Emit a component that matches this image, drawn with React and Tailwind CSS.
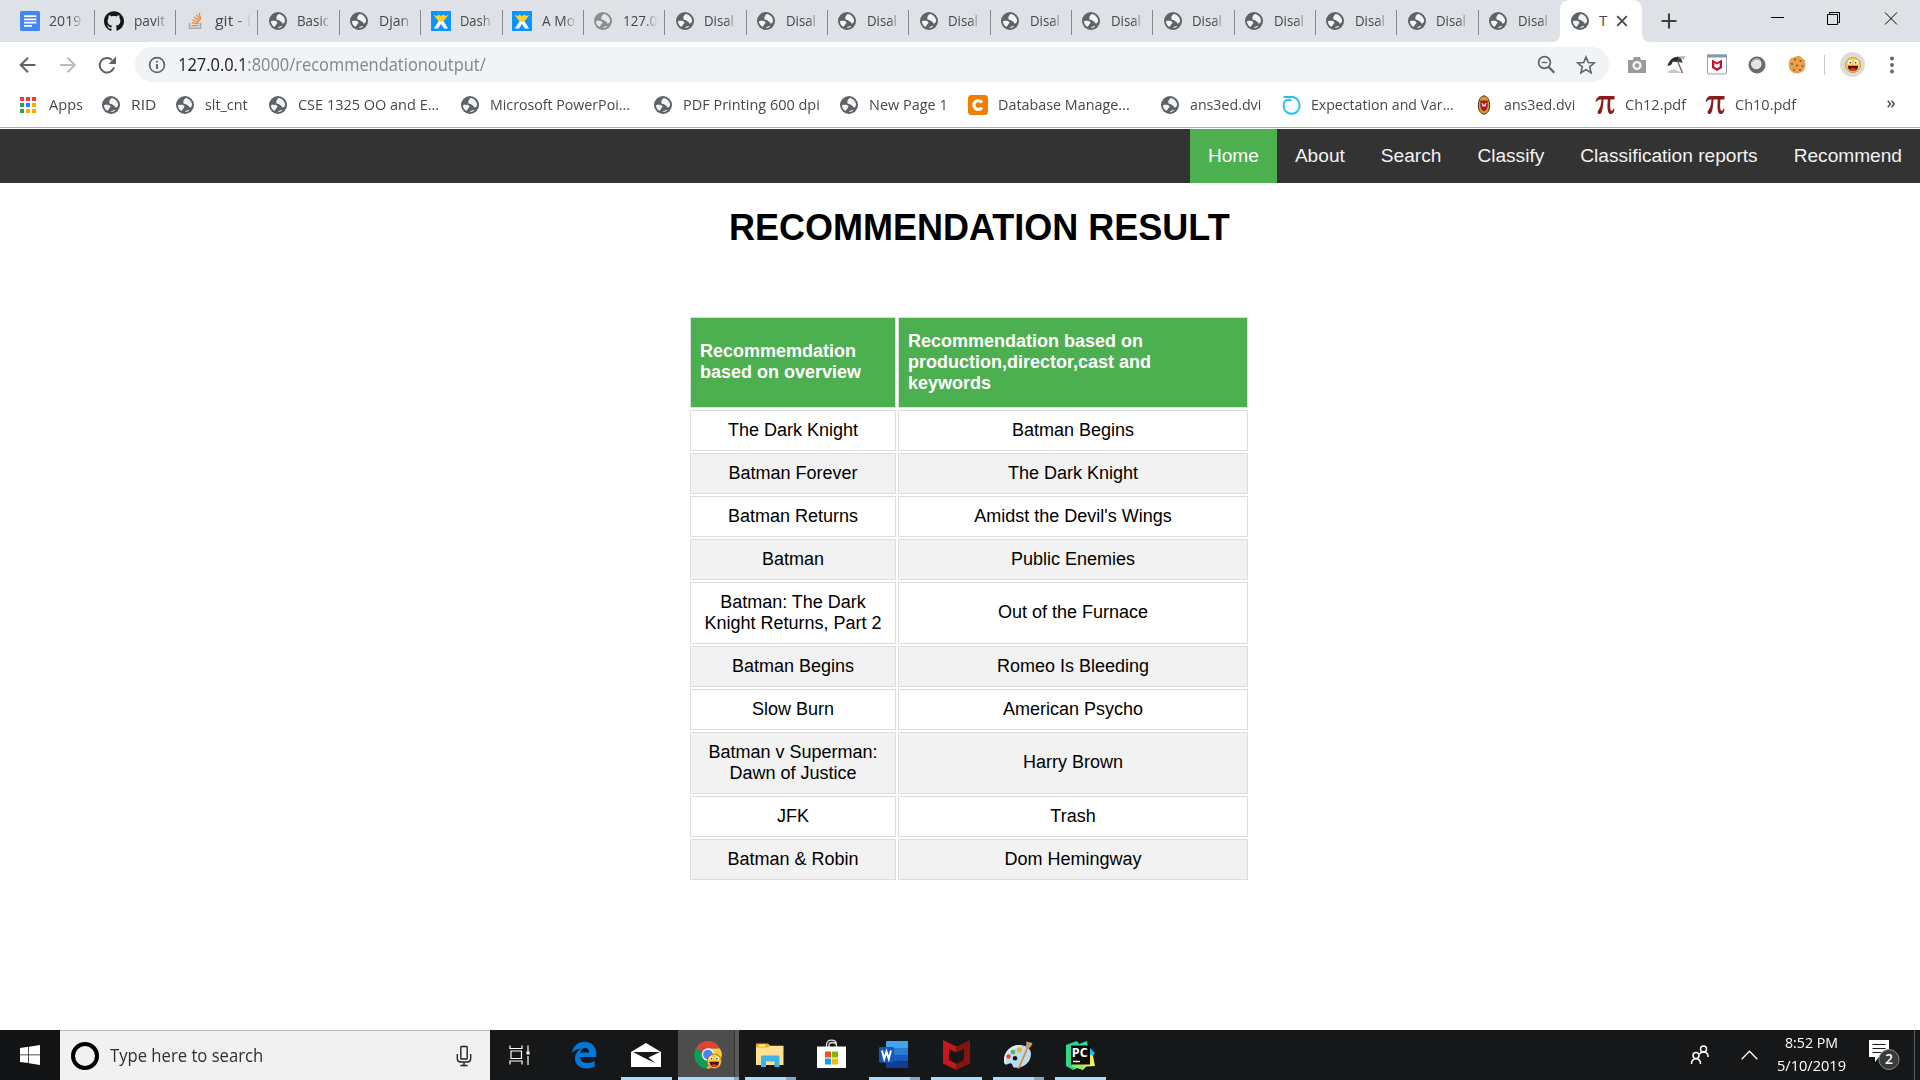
import React, { useLayoutEffect, useRef, useState } from "react";
import { SiGithub } from "react-icons/si";

/* Text condensed or stretched horizontally to an exact width. */
function Fit({ w, className = "", children }) {
  const ref = useRef(null);
  const [s, setS] = useState(1);
  useLayoutEffect(() => {
    setS(w / ref.current.offsetWidth);
  }, [w]);
  return (
    <span className={"block whitespace-nowrap " + className} style={{ width: w }}>
      <span ref={ref} className="inline-block origin-left" style={{ transform: `scaleX(${s})` }}>
        {children}
      </span>
    </span>
  );
}

const Globe = ({ light }) => (
  <svg viewBox="0 0 20 20" className="h-5 w-5 shrink-0">
    <circle cx="10" cy="10" r="9" fill={light ? "#8b8d90" : "#5f6368"} />
    <path
      d="M10.6 2.9 L9.2 4.6 C8.8 6 7.6 6.2 8.6 7.4 C7.6 8.4 8.8 8.8 10.4 8.9 C11.6 9 11.6 10.4 13 10.6 C14.4 10.8 13.4 12.6 14.8 12.6 C16.4 12.4 17 11 17.1 9.6 C16.9 6.5 14.4 3.4 10.6 2.9 Z M3 10.2 C5 9.4 8.4 9.8 9.3 11 C10 12.4 8.4 12.6 8.2 13.6 C8 15 6.8 14.6 6.6 15.9 C4.4 14.8 2.8 12.4 3 10.2 Z M10 17 C10.4 15.4 12.4 15.8 13.2 14.8 L14.2 15.6 C13 16.7 11.4 17.2 10 17 Z"
      fill={light ? "#e3e6e9" : "#f1f3f4"}
    />
  </svg>
);

const Docs = () => (
  <svg viewBox="0 0 20 20" className="h-5 w-5 shrink-0">
    <rect width="20" height="20" rx="1.5" fill="#4285f4" />
    <path d="M4 5.2h12.4M4 8.4h12.4M4 11.6h12.4M4 14.8h8" stroke="#fff" strokeWidth="1.7" />
  </svg>
);

const Stack = () => (
  <svg viewBox="0 0 20 20" className="h-5 w-5 shrink-0" fill="none">
    <path d="M3.5 12v5.2h11V12" stroke="#a6abb0" strokeWidth="1.6" />
    <path
      d="M5.5 14.6h7M5.8 11.6l6.8 1.1M6.4 8.8l6.4 2.5M8 6l5.6 4.1M10.3 3.6l4.2 5.2M13 2l1.8 6.4"
      stroke="#f48024"
      strokeWidth="1.2"
    />
  </svg>
);

const Wix = () => (
  <svg viewBox="0 0 20 20" className="h-5 w-5 shrink-0">
    <rect width="20" height="20" fill="#0c94fb" />
    <path d="M3 17.5 L8 9.5 h4 L17 17.5 h-4 L10 13 L7 17.5Z" fill="#fff" />
    <path d="M2.5 4 l3.5 1 l1.3-1.6 L10 5 l2.7-1.6 L14 5 l3.5-1 L13.5 9 L11.5 10.8 h-3 L6.5 9Z" fill="#fcd02c" />
  </svg>
);

/* icon, label, label width, tab width */
const TABS = [
  [Docs, "2019", 32, 84.5],
  [() => <SiGithub className="h-5 w-5 shrink-0 text-[#171515]" />, "pavit", 31, 81.7],
  [Stack, "git - l", 36, 82.3],
  [Globe, "Basic", 32, 81.35],
  [Globe, "Djan", 30, 81.35],
  [Wix, "Dash", 31, 81.35],
  [Wix, "A Mo", 33, 81.35],
  [() => <Globe light />, "127.0", 34, 81.35],
  ...Array.from({ length: 11 }, () => [Globe, "Disal", 30, 81.35]),
];

function TabStrip() {
  return (
    <div className="flex h-[42px] bg-[#dee1e6] pl-[10px]">
      {TABS.map(([Icon, label, lw, tw], i) => (
        <div key={i} className="flex h-[42px] shrink-0 items-center pl-[9.5px]" style={{ width: tw }}>
          <Icon />
          <div className="-mt-[2px] ml-[9.5px] w-[36px] shrink-0 [mask-image:linear-gradient(90deg,#000_60%,rgba(0,0,0,0.15)_90%)]">
            <Fit w={lw} className="text-[15px] leading-5 text-[#45484c]">
              {label}
            </Fit>
          </div>
          <div className={"ml-auto mt-[2px] h-[25px] w-px " + (i === 18 ? "" : "bg-[#86898d]")} />
        </div>
      ))}
      <div className="flex">
        <svg viewBox="0 0 98 42" className="-ml-2 h-[42px] w-[98px] shrink-0">
          <path d="M0 42 Q8 42 8 33 V10 Q8 0 18 0 H80 Q90 0 90 10 V33 Q90 42 98 42Z" fill="#fff" />
        </svg>
        <div className="-ml-[90px] flex w-[90px] items-center pl-[10px]">
          <Globe />
          <span className="-mt-[2px] ml-[9px] w-[9px] text-[15px] leading-5 text-[#45484c]">T</span>
          <svg viewBox="0 0 12 12" className="ml-[8px] h-3 w-3">
            <path d="M1.2 1.2l9.6 9.6M10.8 1.2l-9.6 9.6" stroke="#45484c" strokeWidth="1.8" />
          </svg>
        </div>
      </div>
      <div className="flex flex-1 pl-[11px] pt-[13px]">
        <svg viewBox="0 0 16 16" className="h-4 w-4">
          <path d="M8 .5v15M.5 8h15" stroke="#3c4043" strokeWidth="2.1" />
        </svg>
      </div>
      <svg viewBox="0 0 130 14" className="mr-[22px] mt-[12px] h-[14px] w-[130px] shrink-0" fill="none" stroke="#000">
        <path d="M3 5.5h13M117 .5l12 12M129 .5l-12 12" />
        <path d="M59.5 2.500h10v10h-10zM61.500 2.500V.500h10v10h-2" />
      </svg>
    </div>
  );
}

function Toolbar() {
  return (
    <div className="flex h-[45px] items-center bg-white">
      <svg viewBox="0 0 100 20" className="ml-[18px] h-5 w-[100px] shrink-0" fill="none" strokeWidth="2">
        <path d="M17.500 10H3M10 2.700L2.700 10l7.300 7.300" stroke="#5f6368" />
        <path d="M42 10h14.500M49.500 2.700l7.300 7.300-7.300 7.300" stroke="#babcbe" />
        <path d="M96 12.200a7.300 7.300 0 1 1-1.900-7.200" stroke="#5f6368" />
        <path d="M98 1.500v7.400h-7.400z" fill="#5f6368" />
      </svg>
      <div className="ml-[17px] flex h-[35px] w-[1474px] shrink-0 items-center rounded-full bg-[#f1f3f4]">
        <svg viewBox="0 0 18 18" className="ml-[13px] h-[18px] w-[18px]" fill="none">
          <circle cx="9" cy="9" r="7.400" stroke="#5f6368" strokeWidth="1.700" />
          <path d="M9 8v5M9 4.700v1.900" stroke="#5f6368" strokeWidth="1.900" />
        </svg>
        <Fit w={308} className="-mt-[2px] ml-[12px] text-[17.5px] leading-6 text-[#80868b]">
          <span className="text-[#202124]">127.0.0.1</span>:8000/recommendationoutput/
        </Fit>
        <svg viewBox="0 0 60 20" className="ml-auto mr-[13px] h-5 w-[60px]" fill="none" stroke="#5f6368">
          <circle cx="8.500" cy="7.500" r="5.900" strokeWidth="1.700" />
          <path d="M12.700 12l5.500 5.700" strokeWidth="2.200" />
          <path d="M5.700 7.500h5.600" strokeWidth="1.300" />
          <path
            d="M50 2l2.300 5.500 6 .5-4.600 3.900 1.400 5.800L50 14.600l-5.100 3.100 1.400-5.800L41.700 8l6-.5z"
            strokeWidth="1.600"
          />
        </svg>
      </div>
      <div className="ml-[18px] flex items-center">
        <svg viewBox="0 0 20 18" className="h-[18px] w-5">
          <path d="M1 4h5l1-3h6l1 3h5v13H1z" fill="#9a9a9a" />
          <circle cx="10" cy="9.500" r="4.600" fill="#f4f4f4" />
          <circle cx="10" cy="9.500" r="2.300" fill="#9a9a9a" />
        </svg>
        <svg viewBox="0 0 22 20" className="ml-[19px] h-5 w-[22px]">
          <path d="M1 17Q7 13 10 15l7 3H3z" fill="#c9c9c9" />
          <path d="M1.500 11C3 5 8 1 13 2l-2 5-4-.5-2 3.500z" fill="#2b2b2b" />
          <path d="M13 2q3 1 3.500 6L11 6.500z" fill="#444" />
          <path d="M12 1.500L20 1q-3 2-1.500 4l-2-1z" fill="#b5b5b5" />
          <path d="M11.500 6l5 12" stroke="#8b4a3c" strokeWidth="1.200" />
        </svg>
        <svg viewBox="0 0 20 20" className="ml-[19px] h-[21px] w-5">
          <rect x=".5" y=".5" width="19" height="19" rx="1" fill="#fff" stroke="#9aa0a6" />
          <rect width="20" height="3" fill="#7f9dac" />
          <path d="M5 5l5 3 5-3v8.500l-5 3-5-3z" fill="#c8102e" />
          <path d="M7.300 8.500L10 10l2.700-1.500v3.800L10 13.800l-2.700-1.500z" fill="#fff" />
        </svg>
        <svg viewBox="0 0 18 18" className="ml-[21px] h-[18px] w-[18px]">
          <circle cx="9" cy="9" r="8.500" fill="#68696a" />
          <circle cx="8.300" cy="8" r="5.300" fill="#e4e4e4" />
          <path d="M4 6a5.300 5.300 0 0 1 8-2" stroke="#aaa" strokeWidth="1.500" fill="none" />
        </svg>
        <svg viewBox="0 0 20 20" className="ml-[21px] h-5 w-5">
          <path d="M10 1Q13 0 15 3l3 2 .5 6-2 5-5 2.500-5-.500-4-3.500-1-6 2-5Z" fill="#e9a04b" />
          <g fill="#8a5220">
            <circle cx="8" cy="4.500" r="1" />
            <circle cx="13.500" cy="6" r="1" />
            <circle cx="5" cy="9" r="1" />
            <circle cx="10" cy="10.500" r="1.100" />
            <circle cx="15.500" cy="11" r="1" />
            <circle cx="7" cy="15" r="1" />
            <circle cx="13" cy="15" r="1" />
          </g>
        </svg>
        <div className="ml-[17px] h-5 w-px bg-[#c6c8ca]" />
        <div className="ml-[15px] flex h-[25px] w-[25px] items-center justify-center rounded-full bg-[#dcdcdc]">
          <Smiley className="h-4 w-4" />
        </div>
        <svg viewBox="0 0 4 18" className="ml-[25px] h-[18px] w-1" fill="#5f6368">
          <circle cx="2" cy="2.500" r="1.900" />
          <circle cx="2" cy="9" r="1.900" />
          <circle cx="2" cy="15.500" r="1.900" />
        </svg>
      </div>
    </div>
  );
}

const Smiley = ({ className }) => (
  <svg viewBox="0 0 16 16" className={className}>
    <circle cx="8" cy="8" r="7.600" fill="#fbcf4b" stroke="#c98a17" strokeWidth=".7" />
    <ellipse cx="5" cy="5.200" rx="2" ry="2.200" fill="#fff" />
    <ellipse cx="11" cy="5.200" rx="2" ry="2.200" fill="#fff" />
    <circle cx="5.300" cy="5.600" r=".9" fill="#333" />
    <circle cx="10.700" cy="5.600" r=".9" fill="#333" />
    <path d="M2.800 8.700h10.400Q13 14 8 14.200 3 14 2.800 8.700Z" fill="#5a0d12" />
    <path d="M4.700 12.200Q8 10 11.300 12.200 10 14 8 14.100 6 14 4.700 12.200Z" fill="#e33b3b" />
  </svg>
);

const AppsIcon = () => (
  <svg viewBox="0 0 20 20" className="h-5 w-5 shrink-0">
    <path d="M1 2h4v4H1zM7 2h4v4H7zM13 2h4v4h-4z" fill="#f23d36" />
    <path d="M1 8h4v4H1zM1 14h4v4H1z" fill="#2fa055" />
    <path d="M7 8h4v4H7z" fill="#2f85f0" />
    <path d="M13 8h4v4h-4zM7 14h4v4H7zM13 14h4v4h-4z" fill="#f9ab00" />
  </svg>
);

const Chegg = () => (
  <svg viewBox="0 0 20 20" className="h-5 w-5 shrink-0">
    <rect width="20" height="20" rx="3.500" fill="#f27e00" />
    <path d="M13.900 7.600A4.400 4.400 0 1 0 13.900 12.600" fill="none" stroke="#fff" strokeWidth="3.200" />
  </svg>
);

const Ring = () => (
  <svg viewBox="0 0 20 20" className="h-5 w-5 shrink-0" fill="none" stroke="#22c3f0" strokeWidth="1.900">
    <path d="M2.500 2H12Q18.600 3.500 18.600 11a8 7.800 0 0 1-16 0Q2.500 6.500 5.500 5.200 8 4.200 10.500 5.500" />
  </svg>
);

const Crest = () => (
  <svg viewBox="0 0 20 20" className="h-5 w-5 shrink-0">
    <ellipse cx="10" cy="10" rx="5.700" ry="9.200" fill="#caa33a" stroke="#4a3510" strokeWidth="1" />
    <path d="M6.300 5.500h7.400v6Q13 15 10 16.500 7 15 6.300 11.500Z" fill="#b5121b" />
    <path d="M8 8l1 3.500L10 9.500l1 2 1-3.500" stroke="#fff" fill="none" strokeWidth="1" />
  </svg>
);

const Pi = () => (
  <svg viewBox="0 0 20 20" className="h-5 w-5 shrink-0">
    <path
      d="M.5 6.500Q2 1 5.500 1H19.500V4.500H15.500Q14.500 14 16 15.500 17.500 16.500 18.500 13.800H19.500Q19 19.300 15.300 19 11.500 18.500 12.800 4.500H8.500Q8 14 6.500 17.500 5 20 3 18.500 1.700 17 3.500 15 6 12 6.500 4.500 3 4 1.500 6.800Z"
      fill="#8a1c1c"
    />
  </svg>
);

/* icon, label, label width, total slot width */
const BOOKMARKS = [
  [AppsIcon, "Apps", 34, 82],
  [Globe, "RID", 25, 74],
  [Globe, "slt_cnt", 43, 93],
  [Globe, "CSE 1325 OO and E...", 141, 192],
  [Globe, "Microsoft PowerPoi...", 140, 193],
  [Globe, "PDF Printing 600 dpi", 137, 186],
  [Globe, "New Page 1", 79, 129],
  [Chegg, "Database Manage...", 132, 192],
  [Globe, "ans3ed.dvi", 71, 121],
  [Ring, "Expectation and Var...", 143, 193],
  [Crest, "ans3ed.dvi", 71, 121],
  [Pi, "Ch12.pdf", 61, 110],
  [Pi, "Ch10.pdf", 61, 110],
];

function Bookmarks() {
  return (
    <div className="flex h-[41px] border-b border-[#aeb1b3] bg-white pl-[19px]">
      {BOOKMARKS.map(([Icon, label, w, slot], i) => (
        <div key={i} className="flex h-9 shrink-0 items-center" style={{ width: slot }}>
          <Icon />
          <Fit w={w} className="-mt-[2px] ml-[10px] text-[15px] leading-5 text-[#45484c]">
            {label}
          </Fit>
        </div>
      ))}
      <svg viewBox="0 0 8 8" className="ml-auto mr-[25px] mt-[13px] h-2 w-2" fill="none" stroke="#45484c" strokeWidth="1.400">
        <path d="M.7.700L3.500 4 .7 7.300M4.500.700L7.300 4 4.500 7.300" />
      </svg>
    </div>
  );
}

const NAV = ["Home", "About", "Search", "Classify", "Classification reports", "Recommend"];

const ROWS = [
  ["The Dark Knight", "Batman Begins"],
  ["Batman Forever", "The Dark Knight"],
  ["Batman Returns", "Amidst the Devil's Wings"],
  ["Batman", "Public Enemies"],
  ["Batman: The Dark Knight Returns, Part 2", "Out of the Furnace"],
  ["Batman Begins", "Romeo Is Bleeding"],
  ["Slow Burn", "American Psycho"],
  ["Batman v Superman: Dawn of Justice", "Harry Brown"],
  ["JFK", "Trash"],
  ["Batman & Robin", "Dom Hemingway"],
];

const CELL = "flex items-center border border-[#dddddd] px-[9px] ";

function Page() {
  return (
    <main className="flex-1 bg-white font-['Liberation_Sans',Arial,sans-serif] text-black">
      <nav className="mt-px flex h-[54px] justify-end bg-[#333333] text-[19.125px] leading-[22px] text-[#f2f2f2]">
        {NAV.map((n, i) => (
          <a key={n} className={"px-[18px] pt-[16px] " + (i === 0 ? "bg-[#4CAF50] text-white" : "")}>
            {n}
          </a>
        ))}
      </nav>
      <h1 className="ml-[729px] mt-[24px] text-[36px] font-bold leading-[42px]">RECOMMENDATION RESULT</h1>
      <div className="ml-[690px] mt-[68px] grid w-[558px] grid-cols-[206px_350px] gap-[2px] text-[18px] leading-[21px]">
        <div className={CELL + "h-[91px] bg-[#4CAF50] pb-[2px] font-bold text-white"}>Recommemdation based on overview</div>
        <div className={CELL + "h-[91px] bg-[#4CAF50] pr-[60px] font-bold text-white"}>
          Recommendation based on production,director,cast and keywords
        </div>
        {ROWS.map((r, i) =>
          r.map((c, j) => (
            <div
              key={i + "-" + j}
              className={
                CELL +
                "justify-center pt-[9px] text-center " +
                (j === 1 && (i === 4 || i === 7) ? "pb-[11px] " : "pb-[9px] ") +
                (i % 2 ? "bg-[#f2f2f2]" : "bg-white")
              }
            >
              {c}
            </div>
          ))
        )}
      </div>
    </main>
  );
}

const Edge = () => (
  <svg viewBox="0 0 26 28" className="h-7 w-[26px]">
    <path
      d="M.5 12.500C2 5 7 .8 13.500.8 21 .8 25.300 6 25.300 13v3H9.200c.2 4 3.300 6 7.300 6 2.600 0 5-.7 7.200-2v5.500c-2.400 1.300-5 1.900-8.200 1.900C8.500 27.400 4 23.300 4 17.200 4 13 6.500 9.600 10 7.700 5.800 8.200 2.500 9.500.5 12.500ZM9.400 11.600h8.800c0-3-1.500-4.700-4.200-4.700-2.500 0-4.200 1.900-4.600 4.700Z"
      fill="#0078d7"
    />
  </svg>
);
const Mail = () => (
  <svg viewBox="0 0 30 24" className="-mt-px h-6 w-[30px]">
    <path d="M0 9L15 0l15 9v15H0z" fill="#fff" />
    <path d="M2 9h27L17.500 14.500 25 20.500 12.500 14.500Z" fill="#181818" />
  </svg>
);
const Chrome = () => (
  <svg viewBox="0 0 28 28" className="h-7 w-7">
    <path d="M14 14L2 7.200A13.500 13.500 0 0 1 26 7.500H14Z" fill="#db4437" />
    <path d="M14 14L2 7.200A13.500 13.500 0 0 0 12.500 27.400L19 17Z" fill="#0f9d58" />
    <path d="M14 7.500H26A13.500 13.500 0 0 1 12.500 27.400L19 17Z" fill="#ffcd40" />
    <circle cx="14" cy="13.600" r="6.300" fill="#f1f1f1" />
    <circle cx="14" cy="13.600" r="4.900" fill="#4285f4" />
    <svg x="12.500" y="12.500" width="15.500" height="15.500" viewBox="0 0 16 16">
      <circle cx="8" cy="8" r="7.500" fill="#fbc63d" stroke="#8a5a17" strokeWidth=".8" />
      <circle cx="5" cy="5" r="1.800" fill="#fff" />
      <circle cx="11" cy="5" r="1.800" fill="#fff" />
      <circle cx="5.300" cy="5.300" r=".8" fill="#333" />
      <circle cx="10.700" cy="5.300" r=".8" fill="#333" />
      <path d="M3 8.500h10Q12.500 14 8 14T3 8.500Z" fill="#4f0d10" />
      <path d="M4.700 12Q8 10 11.300 12 10 14 8 14T4.700 12Z" fill="#e8352f" />
    </svg>
  </svg>
);
const Explorer = () => (
  <svg viewBox="0 0 28 24" className="-mt-px h-6 w-7">
    <path d="M0 .8h12l2 2h13.500V22H0z" fill="#fde293" />
    <path d="M0 .8h12l2 2-2 1.700H0z" fill="#f2ae1c" />
    <path d="M3 1.800h6v1.500H3z" fill="#fff" />
    <path d="M5 24V13.500q0-1 1-1h16.500q1 0 1 1V24h-5v-5.500h-8.500V24z" fill="#3eb3e8" />
  </svg>
);
const Store = () => (
  <svg viewBox="0 0 29 30" className="-mt-[2px] mr-[2px] h-[30px] w-[29px]">
    <path d="M9.500 8.500V6q0-4.800 5-4.800t5 4.800v2.500M12 8.500V6q0-2.500 3.500-2.500t3.500 2.500" fill="none" stroke="#ddd" strokeWidth="1.300" />
    <path d="M0 7.500h29V29H1q-1 0-1-1z" fill="#fff" />
    <path d="M8 12.500h6v6H8z" fill="#f25022" />
    <path d="M15 12.500h6v6h-6z" fill="#7fba00" />
    <path d="M8 19.500h6v6H8z" fill="#00a4ef" />
    <path d="M15 19.500h6v6h-6z" fill="#ffb900" />
  </svg>
);
const Word = () => (
  <svg viewBox="0 0 29 27" className="-mt-px mr-[2px] h-[27px] w-[29px]">
    <path d="M7 1q0-1 1-1h21v7H7z" fill="#41a5ee" />
    <path d="M7 7h22v7H7z" fill="#2b7cd3" />
    <path d="M7 14h22v6.500H7z" fill="#185abd" />
    <path d="M7 20.500h22V27H8q-1 0-1-1z" fill="#103f91" />
    <rect y="6" width="15" height="15.500" rx="1.200" fill="#1a57b5" />
    <path d="M3 9.500l2.200 8.500 2.300-7.500 2.300 7.500L12 9.500" fill="none" stroke="#fff" strokeWidth="1.900" />
  </svg>
);
const McAfee = () => (
  <svg viewBox="0 0 27 30" className="-mt-px h-[30px] w-[27px]">
    <path d="M0 0l13.500 6.500v6L6 9v11l7.500 4v6L0 23.500z" fill="#c7161d" />
    <path d="M27 0L13.500 6.500v6L21 9v11l-7.500 4v6L27 23.500z" fill="#84150f" />
  </svg>
);
const Paint = () => (
  <svg viewBox="0 0 30 30" className="-mt-px h-[30px] w-[30px]">
    <path
      d="M16 5C8 5 1 12 1 20q0 4 2 4.500c2 .5 3-2 5-1 3 1.500 0 4 5 4.300C21 28 28 22 28 14c0-5-4-9-12-9Zm-4 11a2.300 2.300 0 1 1 0 4.600 2.300 2.300 0 0 1 0-4.600Z"
      fill="#b9dcef"
    />
    <path d="M16 5C8 5 1 12 1 20q0 4 2 4.500C3 14 9 8 20 5.500Z" fill="#d8edf7" />
    <circle cx="5.500" cy="16.500" r="2.200" fill="#e5483b" />
    <circle cx="10" cy="12" r="2.300" fill="#59b947" />
    <circle cx="16.500" cy="10" r="2.500" fill="#f7ae1d" />
    <path d="M23.500 8L25 9 16.500 28.500 14.500 29z" fill="#e28a2f" />
    <path d="M22.500 7.500Q24 3 23 1.500L29.500 3 28 6.500 25 9z" fill="#c99a6a" />
  </svg>
);
const PyCharm = () => (
  <svg viewBox="0 0 30 30" className="-mt-px h-[30px] w-[30px]">
    <path d="M1 5L12 1l2 3 8-3 1 6-8 20-7 3-7-4z" fill="#2fd98b" />
    <path d="M23 6l7 7-4 6-5 4z" fill="#18bde8" />
    <path d="M24 14l4 2 2 10-9 .5-3 3.500-11-4 8-5z" fill="#f5f14c" />
    <path d="M7 24l13 .5-2 5-11-3z" fill="#8ee860" />
    <rect x="6" y="5.500" width="19" height="19" fill="#0a0a0a" />
    <text x="6.800" y="17" fontSize="12.500" fontWeight="bold" fill="#fff" fontFamily="Open Sans, sans-serif">
      PC
    </text>
    <path d="M8 21.500h7" stroke="#fff" strokeWidth="1.500" />
  </svg>
);

/* icon, main underline width, second-window underline width, active */
const APPS = [
  [Edge, 0, 0],
  [Mail, 51, 0],
  [Chrome, 56, 5, true],
  [Explorer, 41, 10],
  [Store, 0, 0],
  [Word, 41, 10],
  [McAfee, 51, 0],
  [Paint, 41, 10],
  [PyCharm, 51, 0],
];

function Taskbar() {
  return (
    <footer className="flex h-[50px] shrink-0 bg-[#161718] text-white">
      <div className="flex w-[60px] items-center justify-center bg-[#121416]">
        <svg viewBox="0 0 20 20" className="h-5 w-5" fill="#fff">
          <path d="M0 3l8.300-1.200v7.700H0zM9 1.700L20 0v9.500H9zM0 10.300h8.300V18L0 16.900zM9 10.300h11V20L9 18.200z" />
        </svg>
      </div>
      <div className="flex w-[430px] items-center border-t border-[#b9b9b9] bg-[#f1f1f1]">
        <div className="ml-[11px] h-7 w-7 rounded-full border-4 border-black" />
        <Fit w={153} className="-mt-[2px] ml-[11px] text-[18.5px] leading-6 text-[#2f2f2f]">
          Type here to search
        </Fit>
        <svg viewBox="0 0 16 22" className="ml-auto mr-[18px] h-[22px] w-4" fill="none" stroke="#222" strokeWidth="1.400">
          <rect x="4.800" y="1.500" width="6.400" height="12.500" rx=".8" />
          <path d="M1.300 9v4.500q0 3.500 3.500 3.500h6.400q3.500 0 3.500-3.500V9M8 17v3.500M4.500 20.500h7" />
        </svg>
      </div>
      <div className="flex w-[63px] items-center pl-[19px]">
        <svg viewBox="0 0 22 20" className="-mt-px h-5 w-[22px]" fill="none" stroke="#fff" strokeWidth="1.200">
          <path d="M1 .5v3h12v-3M1 19.500v-3.500h12v3.500M2 6h10.500v7.500H2zM19 .5v5.500M19 11v9" />
          <path d="M17.500 6.300h3v3.200h-3z" fill="#fff" stroke="none" />
        </svg>
      </div>
      {APPS.map(([Icon, a, b, active], i) => (
        <div key={i} className="flex h-[50px] w-[62px] flex-col items-center">
          {active ? (
            <div className="flex h-[47px] w-[61px] items-center bg-[#4d4d4d]">
              <div className="flex w-14 justify-center pl-[4px] pt-[2px]">
                <Icon />
              </div>
              <div className="h-[47px] w-[5px] border-l border-[#333] bg-[#5a5a5a]" />
            </div>
          ) : (
            <div className="flex h-[47px] w-[62px] items-center justify-center pt-[3px]">
              <Icon />
            </div>
          )}
          <div className="flex h-[3px]">
            <div className="h-[3px] bg-[#abdcfb]" style={{ width: a }} />
            <div className="h-[3px] bg-[#88a9c3]" style={{ width: b }} />
          </div>
        </div>
      ))}
      <div className="ml-auto flex items-center">
        <svg viewBox="0 0 20 20" className="h-5 w-5" fill="none" stroke="#fff" strokeWidth="1.500">
          <circle cx="13.500" cy="4" r="3" />
          <circle cx="6" cy="10.500" r="3" />
          <path d="M1.500 19q0-5.300 4.500-5.300t4.500 5.300M9.500 9q1.500-2 4-2 4.500 0 4.700 5" />
        </svg>
        <svg viewBox="0 0 17 10" className="ml-[31px] h-[10px] w-[17px]" fill="none" stroke="#fff" strokeWidth="1.300">
          <path d="M.7 9.200L8.500 1.300l7.800 7.900" />
        </svg>
        <div className="ml-[19px] flex w-[69px] flex-col items-center gap-[3px] pb-[3px] text-[15px] leading-5">
          <Fit w={53}>8:52 PM</Fit>
          <Fit w={69}>5/10/2019</Fit>
        </div>
        <div className="relative ml-[23px] h-[30px] w-[31px]">
          <svg viewBox="0 0 31 30" className="h-[30px] w-[31px]">
            <path d="M0 0h20v17H10l-4 5v-5H0z" fill="#fff" />
            <path d="M3.500 4.500h13M3.500 8.500h13M3.500 12.500h9" stroke="#161718" strokeWidth="1.200" />
            <circle cx="20" cy="19.500" r="10" fill="#3a3b3c" stroke="#8a8a8a" />
          </svg>
          <span className="absolute left-[10px] top-[9px] w-5 text-center text-[14px] font-semibold leading-5">2</span>
        </div>
        <div className="ml-[14px] mr-[5px] h-[50px] w-px bg-[#5c5d5e]" />
      </div>
    </footer>
  );
}

export default function App() {
  return (
    <div className="flex h-[1080px] w-[1920px] flex-col overflow-hidden bg-white font-['Open_Sans','Noto_Sans',sans-serif]">
      <TabStrip />
      <Toolbar />
      <Bookmarks />
      <Page />
      <Taskbar />
    </div>
  );
}
